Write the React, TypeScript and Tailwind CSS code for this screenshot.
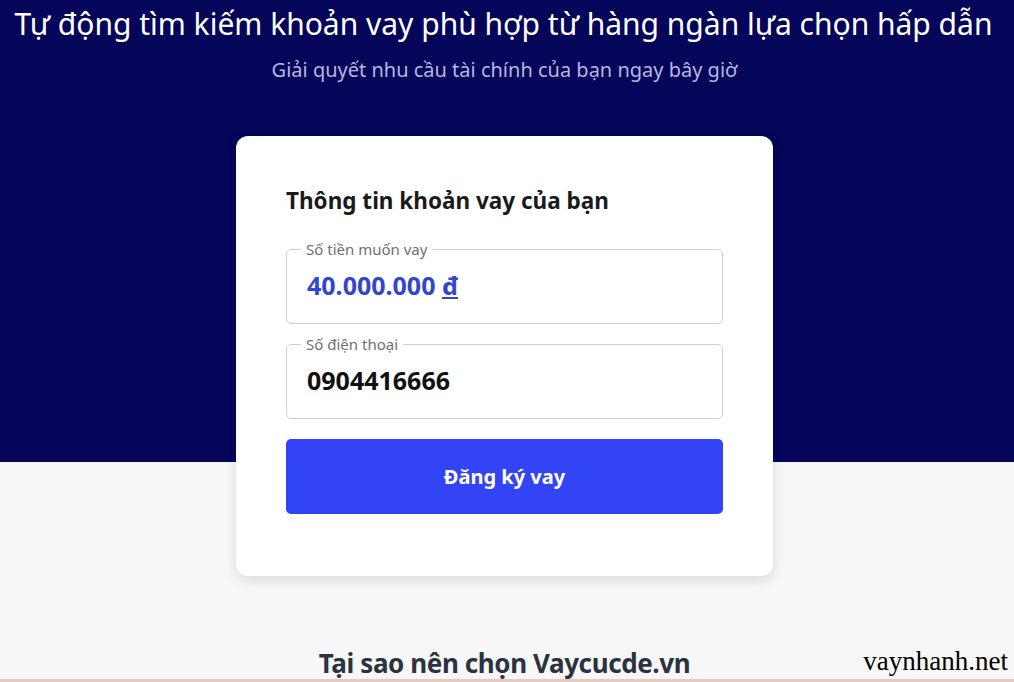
import React from "react";

function Field({ label, children }: { label: string; children: React.ReactNode }) {
  return (
    <fieldset className="border border-[#cfcfcf] rounded-[5px] h-[84px] px-[20px] pb-0 m-0 min-w-0">
      <legend className="px-[5px] text-[15px] leading-[18px] text-[#707070] -ml-[6px]">{label}</legend>
      <div className="mt-[12px]">{children}</div>
    </fieldset>
  );
}

export default function App() {
  return (
    <div
      className="w-[1014px] h-[682px] overflow-hidden relative bg-[linear-gradient(to_bottom,#05055a_0px,#05055a_462px,#f7f7f7_462px)]"
      style={{ fontFamily: '"Noto Sans", "Open Sans", sans-serif' }}
    >
      <div className="flex flex-col items-center">
        <h1 className="mt-[4px] mr-[7px] text-[30px] leading-[40px] text-white font-normal whitespace-nowrap">
          Tự động tìm kiếm khoản vay phù hợp từ hàng ngàn lựa chọn hấp dẫn
        </h1>
        <p className="mt-[13px] mr-[5px] text-[20px] leading-[26px] text-[#b6b6e0] whitespace-nowrap">
          Giải quyết nhu cầu tài chính của bạn ngay bây giờ
        </p>
        <div className="mt-[53px] mr-[5px] w-[537px] h-[440px] bg-white rounded-[12px] shadow-[0_4px_14px_rgba(0,0,0,0.12)] px-[50px] pt-[50px]">
          <h2 className="text-[22.5px] leading-[30px] font-bold text-[#1a1a1a] whitespace-nowrap">
            Thông tin khoản vay của bạn
          </h2>
          <div className="mt-[24px] flex flex-col">
            <Field label="Số tiền muốn vay">
              <span className="text-[25px] leading-[30px] font-bold text-[#3344d0] whitespace-nowrap">
                40.000.000 <span className="underline underline-offset-[2px]">đ</span>
              </span>
            </Field>
            <div className="mt-[11px]">
              <Field label="Số điện thoại">
                <span className="text-[25px] leading-[30px] font-bold text-[#111]">0904416666</span>
              </Field>
            </div>
            <button className="mt-[20px] h-[75px] w-full rounded-[5px] bg-[#3244f5] text-white text-[20px] font-bold">
              Đăng ký vay
            </button>
          </div>
        </div>
        <div className="w-full relative mt-[71px] flex justify-center">
          <h3 className="mr-[5px] text-[26px] leading-[32px] font-bold text-[#2b3340] tracking-[-0.4px] whitespace-nowrap">
            Tại sao nên chọn Vaycucde.vn
          </h3>
          <span
            className="absolute right-[6px] -top-[1px] text-[27px] leading-[30px] text-black"
            style={{ fontFamily: '"Liberation Serif", serif' }}
          >
            vaynhanh.net
          </span>
        </div>
      </div>
      <div className="absolute left-0 right-0 bottom-0 h-[3px] bg-[#e9c9bf]" />
    </div>
  );
}
